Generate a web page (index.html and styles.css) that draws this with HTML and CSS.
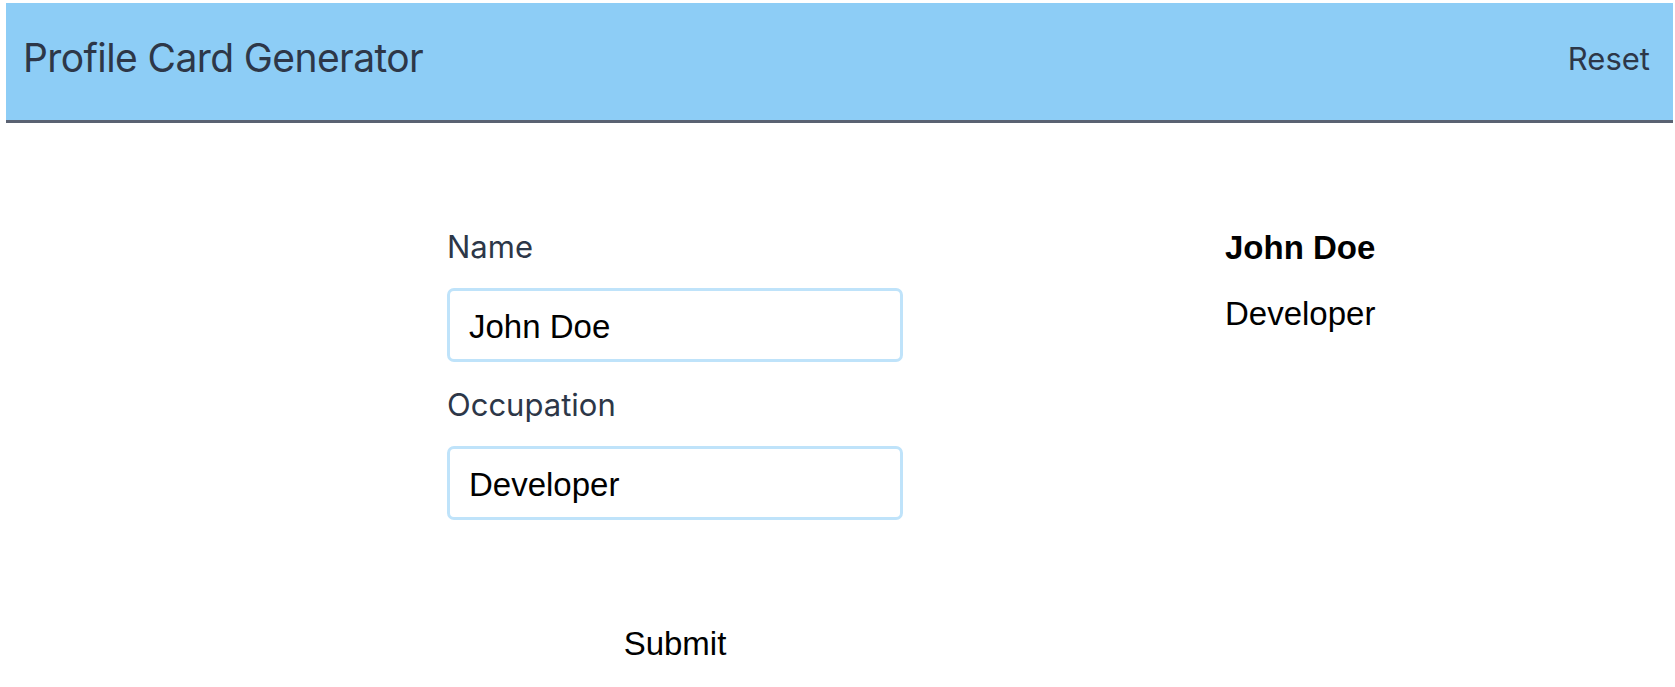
FILE: index.html
```html
<!DOCTYPE html>
<html lang="en">
<head>
	<meta charset="UTF-8">
	<meta name="viewport" content="width=device-width, initial-scale=1.0">
	<title>Profile Card Generator</title>
	<link rel="stylesheet" href="styles.css">
</head>
<body>
	<header class="header">
		<h1 class="header__title">Profile Card Generator</h1>
		<button class="header__reset" type="button">Reset</button>
	</header>
	<main class="main">
		<form class="form">
			<label class="form__label" for="name">Name</label>
			<input class="form__input" id="name" type="text" value="John Doe">
			<label class="form__label" for="occupation">Occupation</label>
			<input class="form__input" id="occupation" type="text" value="Developer">
			<button class="form__submit" type="submit">Submit</button>
		</form>
		<div class="card">
			<p class="card__name">John Doe</p>
			<p class="card__job">Developer</p>
		</div>
	</main>
</body>
</html>
```

FILE: styles.css
```css
*,
*::before,
*::after {
	box-sizing: border-box;
	margin: 0;
	padding: 0;
	border: none;
}

html,
body {
	height: 100%;
}

body {
	font-family: Inter, "Noto Sans", sans-serif;
	background-color: #fff;
	color: #000;
	padding: 3px 2px 0 6px;
}

.header {
	display: flex;
	align-items: center;
	justify-content: space-between;
	height: 120px;
	padding: 0 23px 6px 17px;
	background-color: #8dcdf6;
	border-bottom: 3px solid #5a6272;
	color: #2d3748;
}

.header__title {
	font-size: 39px;
	font-weight: 400;
	line-height: 1.2;
	letter-spacing: -0.6px;
}

.header__reset {
	background: none;
	font-family: inherit;
	font-size: 31px;
	color: #2d3748;
	cursor: pointer;
}

.main {
	display: grid;
	grid-template-columns: 456px 1fr;
	column-gap: 322px;
	padding: 104px 0 0 441px;
}

.form {
	display: flex;
	flex-direction: column;
}

.form__label {
	font-size: 31px;
	line-height: 40px;
	color: #2d3748;
	margin-bottom: 21px;
}

.form__input {
	height: 74px;
	padding: 3px 19px 0;
	margin-bottom: 23px;
	border: 3px solid #bfe3fa;
	border-radius: 7px;
	font-family: "Liberation Sans", Arial, sans-serif;
	font-size: 33px;
	color: #000;
	outline: none;
}

.form__submit {
	align-self: center;
	margin-top: 81px;
	background: none;
	font-family: "Liberation Sans", Arial, sans-serif;
	font-size: 33px;
	line-height: 40px;
	color: #000;
	cursor: pointer;
}

.card {
	padding-top: 1px;
	font-family: "Liberation Sans", Arial, sans-serif;
	font-size: 33px;
	line-height: 40px;
}

.card__name {
	font-weight: 700;
	margin-bottom: 26px;
}
```
